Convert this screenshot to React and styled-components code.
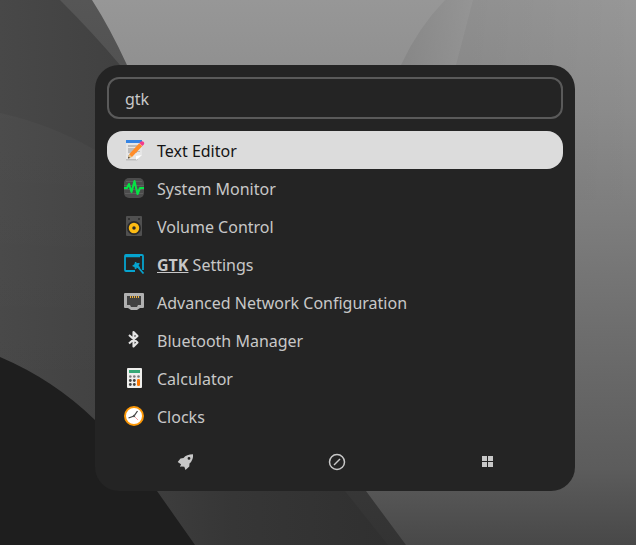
import React, { useState } from "react";
import styled, { createGlobalStyle } from "styled-components";

const Global = createGlobalStyle`
  *, *::before, *::after { box-sizing: border-box; }
  body { margin: 0; background: #6a6a6a; font-family: "Noto Sans", sans-serif; }
`;

const Desktop = styled.main`
  position: relative;
  min-height: 100vh;
  padding: 65px 61px 54px 95px;
  overflow: hidden;
`;

const WallpaperSvg = styled.svg`
  position: absolute;
  inset: 0;
  width: 100%;
  height: 100%;
`;

const Launcher = styled.section`
  position: relative;
  padding: 12px;
  border-radius: 24px;
  background: #242424;
  color: #c8c8c8;
`;

const SearchInput = styled.input`
  display: block;
  width: 100%;
  height: 42px;
  padding: 2px 16px 0;
  border: 2px solid #5a5a5a;
  border-radius: 12px;
  outline: none;
  background: transparent;
  color: inherit;
  font: 16px/24px "Noto Sans", sans-serif;
`;

const Results = styled.ul`
  margin: 12px 0 0;
  padding: 0;
  list-style: none;
`;

const ResultButton = styled.button`
  display: flex;
  align-items: center;
  gap: 12px;
  width: 100%;
  height: 38px;
  padding: 0 16px;
  border: 0;
  border-radius: 16px;
  background: ${(p) => (p.$selected ? "#dcdcdc" : "transparent")};
  color: ${(p) => (p.$selected ? "#141414" : "inherit")};
  font: 16px/24px "Noto Sans", sans-serif;
  text-align: left;
  cursor: pointer;
`;

const AppIcon = styled.svg`
  flex: none;
  width: 22px;
  height: 22px;
`;

const Label = styled.span`
  padding-top: 2px;
`;

const Match = styled.b`
  font-weight: 700;
  text-decoration: underline;
`;

const Modes = styled.nav`
  display: grid;
  grid-template-columns: repeat(3, 1fr);
  height: 44px;
  padding: 10px 0 0 4px;
`;

const ModeButton = styled.button`
  display: grid;
  place-items: center;
  padding: 0;
  border: 0;
  background: transparent;
  color: #c8c8c8;
  cursor: pointer;
`;

const ModeIcon = styled.svg`
  width: 18px;
  height: 18px;
`;

function Wallpaper() {
  return (
    <WallpaperSvg viewBox="0 0 636 545" preserveAspectRatio="none" aria-hidden="true">
      <defs>
        <linearGradient id="sky" x1="0" y1="0" x2="0" y2="1">
          <stop offset="0" stopColor="#979797" />
          <stop offset=".2" stopColor="#8c8c8c" />
          <stop offset=".6" stopColor="#6e6e6e" />
          <stop offset=".86" stopColor="#5c5c5c" />
          <stop offset="1" stopColor="#484848" />
        </linearGradient>
        <linearGradient id="fold" x1="0" y1="0" x2="1" y2="0">
          <stop offset="0" stopColor="#828282" />
          <stop offset="1" stopColor="#949494" />
        </linearGradient>
        <linearGradient id="sheen" x1="0" y1="0" x2="1" y2="0">
          <stop offset="0" stopColor="#000" stopOpacity=".06" />
          <stop offset="1" stopColor="#000" stopOpacity="0" />
        </linearGradient>
        <linearGradient id="ridge" x1="0" y1="0" x2="0" y2="1">
          <stop offset="0" stopColor="#565656" />
          <stop offset="1" stopColor="#333333" />
        </linearGradient>
        <linearGradient id="slope" x1="0" y1="0" x2="1" y2="0">
          <stop offset="0" stopColor="#484848" />
          <stop offset=".3" stopColor="#414141" />
          <stop offset=".6" stopColor="#363636" />
          <stop offset="1" stopColor="#303030" />
        </linearGradient>
        <linearGradient id="haze" x1="0" y1="0" x2="0" y2="1">
          <stop offset="0" stopColor="#fff" stopOpacity=".025" />
          <stop offset="1" stopColor="#fff" stopOpacity="0" />
        </linearGradient>
      </defs>
      <rect width="636" height="545" fill="url(#sky)" />
      <path d="M445 0Q418 28 401 65V150H440L456 65L473 0Z" fill="url(#fold)" opacity=".7" />
      <path d="M473 0H636V200H430L456 65Z" fill="url(#sheen)" />
      <path d="M0 0H92Q110 28 127 65C180 200 300 400 366 491L406 545H0Z" fill="url(#ridge)" />
      <path d="M0 0H60Q94 34 120 65C200 230 300 430 345 491L388 545H0Z" fill="url(#slope)" />
      <path d="M0 113Q50 124 95 150V400H0Z" fill="url(#haze)" />
      <path d="M0 357Q54 380 95 420Q130 452 157 491L195 545H0Z" fill="#1e1e1e" />
    </WallpaperSvg>
  );
}

const appIcons = {
  editor: (
    <>
      <path d="M3 3h16v13l-5 5H3z" fill="#e6e6e6" />
      <path d="M3 20h12l-1 1.500H3z" fill="#bdbdbd" />
      <path d="M3 1h16v3H3z" fill="#3584e4" />
      <path d="M5 6h11v2H5zM5 9h9v5H5zM13 12h4v1h-4zM5 16h4v1H5z" fill="#bcbcbc" />
      <path d="M13 21v-4l6-1z" fill="#fff" />
      <path d="M16.200 4.300l3 3-10 10.500-4 1.500 1.200-4.200z" fill="#ff8d2a" />
      <path d="M6.200 15.300l2.800 2.700-4 1.400z" fill="#e8c588" />
      <path d="M5.500 17.600l1.500 1.400-2 .6z" fill="#333" />
      <path d="M16.300 4.100l1.600-1.500q1.600-1 2.900.5 1 1.200 0 2.500l-1.500 1.500z" fill="#f23c8c" />
    </>
  ),
  monitor: (
    <>
      <rect x="1" y="1" width="20" height="20" rx="5" fill="#4c4c4c" />
      <path d="M3 4.500h16M1 8.500h20M1 12.500h20M2 16.500h18" stroke="#5e5e5e" />
      <path d="M1 11h3l2-4 2.500 8L11.500 4l3 13 2.500-6h4" fill="none" stroke="#05e545" strokeWidth="2" strokeLinejoin="round" />
    </>
  ),
  volume: (
    <>
      <rect x="3" y="1" width="16" height="20" rx="1" fill="#505050" />
      <circle cx="6" cy="4" r="1" fill="#292929" />
      <circle cx="16" cy="4" r="1" fill="#292929" />
      <circle cx="11" cy="13" r="7" fill="#2a2a2a" />
      <circle cx="11" cy="13" r="3.500" fill="none" stroke="#fdbb13" strokeWidth="3.500" />
    </>
  ),
  gtk: (
    <g fill="none" stroke="#06a4cf">
      <path d="M12 18H3q-1 0-1-1V3q0-1 1-1h16q1 0 1 1v14" strokeWidth="1.800" />
      <path d="M2 3h15" strokeWidth="2.500" />
      <path d="M14.500 13.500l6 7" strokeWidth="1.800" />
      <path d="M12.500 9l1.300 1.700 2.400-.3-.9 2.200 1.200 2-2.500-.3-1.600 1.800-.5-2.400-2.200-.9 2.100-1.200z" fill="#06a4cf" />
    </g>
  ),
  network: (
    <>
      <path d="M1 3q0-1 1-1h18q1 0 1 1v13q0 1-1 1h-3l-3 2H8l-3-2H2q-1 0-1-1z" fill="#b0b0b0" />
      <path d="M4 5h14v9h-3l-1 2H8l-1-2H4z" fill="#414141" />
      <path d="M7.500 5v2M9.500 5v2M11.500 5v2M13.500 5v2M15.500 5v2" stroke="#eeb13c" />
    </>
  ),
  bluetooth: (
    <path d="M6 6l8.500 7.500-4 4V3l4 4L6 14.500" fill="none" stroke="#e4e4e4" strokeWidth="2.100" strokeLinejoin="round" />
  ),
  calculator: (
    <>
      <rect x="4" y="1" width="15" height="20" rx="1" fill="#eeeeec" />
      <rect x="6" y="3" width="11" height="3" fill="#35a875" />
      <g fill="#7a7a7a">
        <circle cx="7.300" cy="9.500" r="1.300" />
        <circle cx="11.300" cy="9.500" r="1.300" />
        <circle cx="15.500" cy="9.500" r="1.300" />
      </g>
      <g fill="#444">
        <circle cx="7.300" cy="13.500" r="1.400" />
        <circle cx="11.300" cy="13.500" r="1.400" />
        <circle cx="7.300" cy="17.500" r="1.400" />
        <circle cx="11.300" cy="17.500" r="1.400" />
      </g>
      <rect x="14" y="12" width="3" height="7" rx="1.200" fill="#ff7800" />
    </>
  ),
  clock: (
    <>
      <circle cx="11" cy="11" r="9" fill="#fff" stroke="#fb9706" strokeWidth="2" />
      <path d="M11 11l4 4" stroke="#f3a1a1" />
      <path d="M5.500 13l5.500-2 3.500-5" fill="none" stroke="#444" strokeWidth="1.300" />
      <circle cx="11" cy="11" r="1.200" fill="#555" />
    </>
  ),
};

const apps = [
  { icon: "editor", name: "Text Editor" },
  { icon: "monitor", name: "System Monitor" },
  { icon: "volume", name: "Volume Control" },
  { icon: "gtk", name: "GTK Settings" },
  { icon: "network", name: "Advanced Network Configuration" },
  { icon: "bluetooth", name: "Bluetooth Manager" },
  { icon: "calculator", name: "Calculator" },
  { icon: "clock", name: "Clocks" },
];

const modes = [
  {
    name: "Applications",
    drawing: (
      <path
        fillRule="evenodd"
        fill="currentColor"
        d="M16 1.300Q16.600 7 12.500 10.500L12.300 13.500 8.500 17 7.300 13.800 4.800 13.600 3 13.800 4 11.300.7 9 3.500 5.600 6.500 5Q9.500 1.300 16 1.300zM12 4a1.400 1.400 0 1 0 0 2.800 1.400 1.400 0 0 0 0-2.800z"
      />
    ),
  },
  {
    name: "Run",
    drawing: (
      <g fill="none" stroke="currentColor" strokeWidth="1.500">
        <circle cx="9" cy="9" r="7.500" />
        <path d="M6 12l6-6" />
      </g>
    ),
  },
  {
    name: "Windows",
    drawing: <path d="M3 3h5v5H3zM9 3h5v5H9zM3 9h5v5H3zM9 9h5v5H9z" fill="currentColor" />,
  },
];

function Highlighted({ text, query }) {
  const at = query ? text.toLowerCase().indexOf(query.toLowerCase()) : -1;
  if (at < 0) return text;
  return (
    <>
      {text.slice(0, at)}
      <Match>{text.slice(at, at + query.length)}</Match>
      {text.slice(at + query.length)}
    </>
  );
}

export default function App() {
  const [query, setQuery] = useState("gtk");
  const [selected, setSelected] = useState(0);
  return (
    <>
      <Global />
      <Desktop>
        <Wallpaper />
        <Launcher aria-label="Application launcher">
          <SearchInput
            type="text"
            aria-label="Search"
            spellCheck={false}
            value={query}
            onChange={(e) => setQuery(e.target.value)}
          />
          <Results>
            {apps.map((app, i) => (
              <li key={app.name}>
                <ResultButton type="button" $selected={i === selected} onClick={() => setSelected(i)}>
                  <AppIcon viewBox="0 0 22 22" aria-hidden="true">{appIcons[app.icon]}</AppIcon>
                  <Label>
                    <Highlighted text={app.name} query={query} />
                  </Label>
                </ResultButton>
              </li>
            ))}
          </Results>
          <Modes aria-label="Modes">
            {modes.map((mode) => (
              <ModeButton key={mode.name} type="button" aria-label={mode.name}>
                <ModeIcon viewBox="0 0 18 18" aria-hidden="true">{mode.drawing}</ModeIcon>
              </ModeButton>
            ))}
          </Modes>
        </Launcher>
      </Desktop>
    </>
  );
}
